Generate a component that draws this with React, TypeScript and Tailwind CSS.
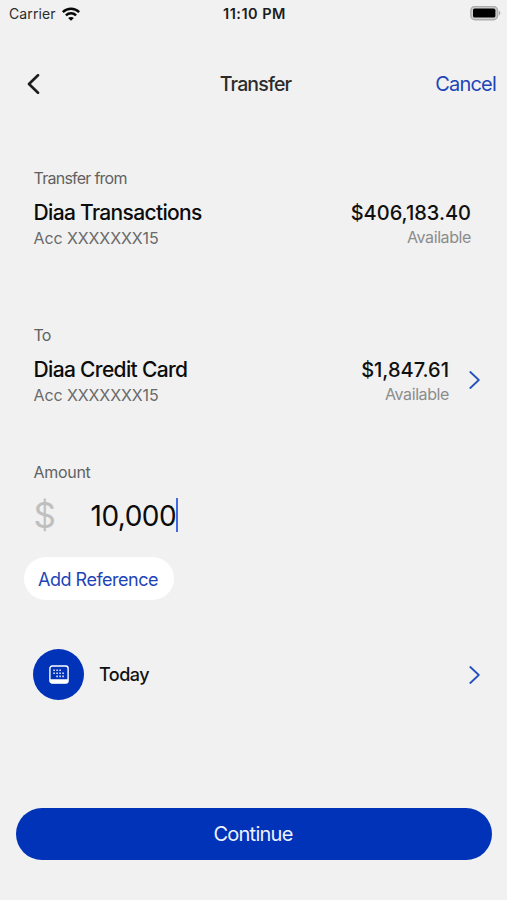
const Chevron = () => (
  <svg className="h-[18px] w-[11px] shrink-0" viewBox="0 0 11 18" fill="none" stroke="#2450bd" strokeWidth="1.8" strokeLinecap="round" strokeLinejoin="round">
    <path d="M1.3 1 9.8 9 1.3 17" />
  </svg>
);

const WifiIcon = () => (
  <svg className="ml-[6px] h-[14px] w-[18px]" viewBox="0 0 18 14" fill="none" stroke="#080808" strokeWidth="2.5">
    <path d="M.8 5.1C5.4.6 12.6.6 17.2 5.1" />
    <path d="M3.9 8.4c2.9-2.8 7.3-2.8 10.2 0" />
    <path d="M9 13.8 6.1 11c1.6-1.5 4.2-1.5 5.8 0Z" fill="#080808" stroke="none" />
  </svg>
);

const BatteryIcon = () => (
  <svg className="h-[15px] w-[31px]" viewBox="0 0 31 15">
    <rect x=".9" y=".5" width="26.6" height="13.2" rx="4" fill="#d0d0d0" stroke="#adadad" strokeWidth="1.5" />
    <rect x="3" y="2.6" width="22.4" height="9" rx="1.6" fill="#000" />
    <path d="M28.8 4.8c2 .7 2 3.9 0 4.6Z" fill="#a8a8a8" />
  </svg>
);

const CalendarIcon = () => (
  <svg className="h-[19px] w-[20px]" viewBox="0 0 20 19" fill="none">
    <rect x=".9" y="1" width="18.2" height="17" rx="2.3" stroke="#fff" strokeWidth="1.4" />
    <path d="M1 14.2h18v2.1c0 1.1-.8 1.9-1.9 1.9H2.9C1.8 18.2 1 17.4 1 16.3Z" fill="#fff" />
    <g stroke="#c3d0f6" strokeWidth="1.6" strokeDasharray="1.8 1.2">
      <path d="M4.2 5.2h9" />
      <path d="M4.2 8.3h12" />
      <path d="M7.2 11.4h9" />
    </g>
  </svg>
);

type AccountProps = {
  label: string;
  name: string;
  number: string;
  balance: string;
  selectable?: boolean;
};

const Account = ({ label, name, number, balance, selectable = false }: AccountProps) => (
  <section className="pl-[33.5px]">
    <div className="text-[16px] leading-5 tracking-[-0.75px] text-[#616161]">{label}</div>
    <div className={`mt-[10px] flex items-start justify-between ${selectable ? 'pr-[27px]' : 'pr-9'}`}>
      <div>
        <div className="pt-px text-[21px] leading-7 font-medium tracking-[-0.66px] text-[#0c0c0c]">{name}</div>
        <div className="mt-px text-[16px] leading-5 tracking-[-0.1px] text-[#6a6a6a]">{number}</div>
      </div>
      <div className="flex items-center gap-5">
        <div className="text-right">
          <div className="pt-px text-[20px] leading-7 font-medium text-[#101010]">{balance}</div>
          <div className="text-[16px] leading-5 tracking-[-0.4px] text-[#8c8c8c]">Available</div>
        </div>
        {selectable && <Chevron />}
      </div>
    </div>
  </section>
);

export default function App() {
  return (
    <div className="flex h-[900px] w-[507px] flex-col overflow-hidden bg-[#f1f1f1] font-['Inter','Liberation_Sans',sans-serif]">
      {/* Status bar */}
      <div className="grid h-[27px] grid-cols-3 items-center pr-[6px] pl-[9px] text-[14px] text-[#2c2c2c]">
        <div className="flex items-center">
          <span className="tracking-[0.1px]">Carrier</span>
          <WifiIcon />
        </div>
        <span className="-ml-px text-center text-[14.5px] font-semibold tracking-[0.5px] text-[#1c1c1c]">11:10 PM</span>
        <div className="flex justify-end">
          <BatteryIcon />
        </div>
      </div>

      {/* Header */}
      <header className="mt-[42px] grid h-7 grid-cols-[1fr_auto_1fr] items-center pr-[11px] pl-[27px] text-[20px]">
        <button aria-label="Back">
          <svg className="h-[20px] w-[13px]" viewBox="0 0 13 20" fill="none" stroke="#1d1d1d" strokeWidth="2.6" strokeLinecap="round" strokeLinejoin="round">
            <path d="M11 1.2 2 10l9 8.8" />
          </svg>
        </button>
        <h1 className="-ml-3 pt-px text-[19.5px] font-medium tracking-[-0.85px] text-[#2b2b2b]">Transfer</h1>
        <button className="text-right tracking-[-0.8px] text-[#1e45b8]">Cancel</button>
      </header>

      <div className="mt-[71px]">
        <Account label="Transfer from" name="Diaa Transactions" number="Acc XXXXXXX15" balance="$406,183.40" />
      </div>
      <div className="mt-[77px]">
        <Account label="To" name="Diaa Credit Card" number="Acc XXXXXXX15" balance="$1,847.61" selectable />
      </div>

      {/* Amount */}
      <section className="mt-[57px] pl-[33.5px]">
        <div className="text-[16px] leading-5 tracking-[-0.3px] text-[#616161]">Amount</div>
        <div className="mt-4 flex h-[34px] items-center">
          <span className="w-[57px] text-[35px] leading-none text-[#bfbfbf]">$</span>
          <span className="pt-px text-[28px] leading-none tracking-[-0.5px] text-[#0c0c0c]">10,000</span>
          <span className="h-[34px] w-[2px] bg-[#4169e1]" />
        </div>
      </section>
      <button className="mt-[25px] ml-6 h-[43px] w-[150px] rounded-full bg-white pt-px pr-0.5 text-[18px] tracking-[-0.5px] text-[#1e45b8]">
        Add Reference
      </button>

      {/* Payment date */}
      <div className="mt-[49px] flex h-[51px] items-center pr-[27px] pl-[33px]">
        <div className="flex size-[51px] items-center justify-center rounded-full bg-[#0033b8]">
          <CalendarIcon />
        </div>
        <span className="ml-[15px] flex-1 text-[18px] font-medium tracking-[-0.5px] text-[#111]">Today</span>
        <Chevron />
      </div>

      <button className="mt-[108px] mr-[15px] ml-4 h-[52px] rounded-full bg-[#0033b8] pr-0.5 text-[20px] tracking-[-0.75px] text-[#eef2ff]">
        Continue
      </button>
    </div>
  );
}
